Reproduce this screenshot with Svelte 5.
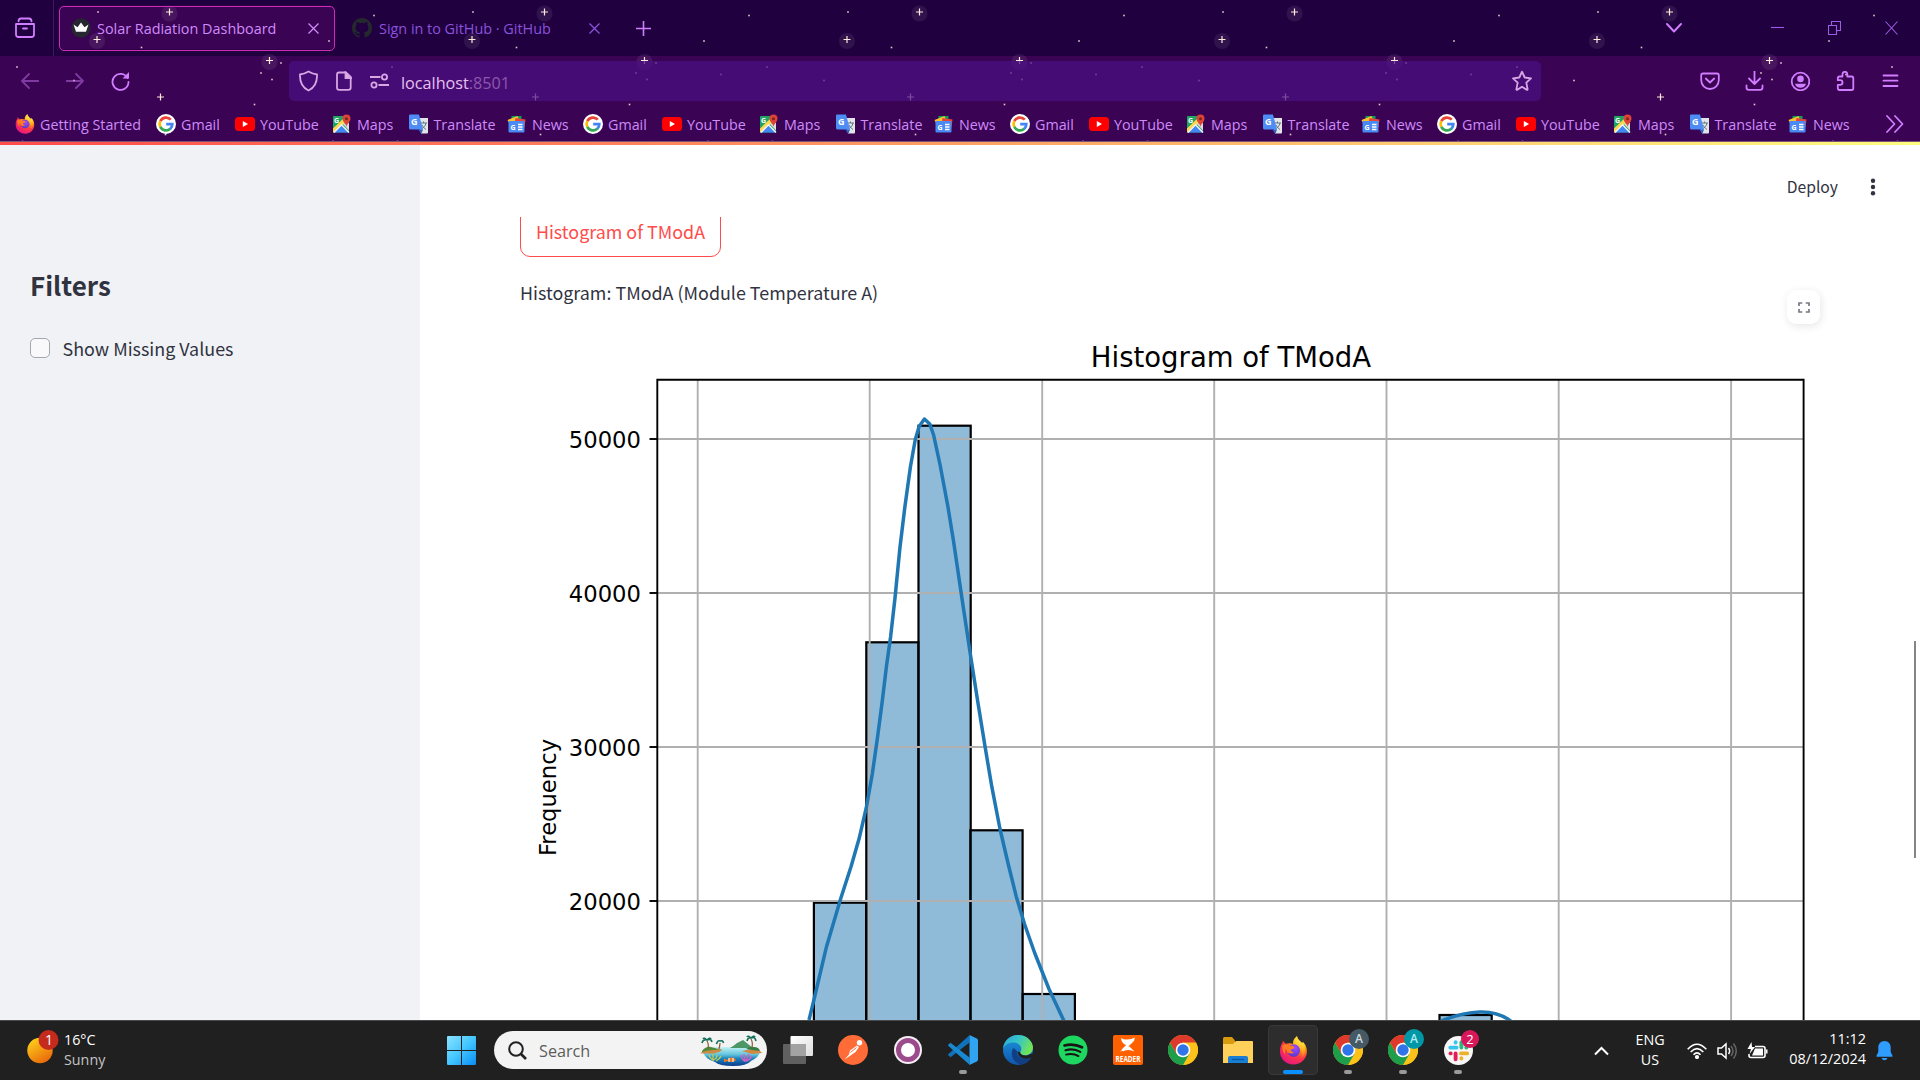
<script>
  const dots = [[98,12],[141.5,47.5],[329,41],[374,15.5],[281,63],[261,73],[272,79.5],[17,67],[254.5,104.5],[165.5,134.5],[22.5,141.5],[333,141.5],[346,74.5],[74,80.5]];
  const plain = [[160.5,97]];
  const glow = [[169.5,12],[97,39.5],[269.5,60.5]];
  const group = [
    { name: 'Gmail', w: 79 },
    { name: 'YouTube', w: 97 },
    { name: 'Maps', w: 76.5 },
    { name: 'Translate', w: 98.5 },
    { name: 'News', w: 76 }
  ];
  const bookmarks = [{ name: 'Getting Started', w: 141 }, ...group, ...group, ...group, ...group];

  const base = 1100;
  const bars = [[813.9,902.7],[866.3,642.3],[918.5,425.7],[970.4,830.3],[1022.7,994],[1439.5,1015]];
  const gx = [697.7,869.7,1042.2,1214.2,1386.5,1558.7,1731.1];
  const gy = [[439,'50000'],[593,'40000'],[747,'30000'],[901,'20000']];
  const curve = [[809,1020],[813.9,1000],[826.5,946.7],[840.8,898.3],[851,866.7],[859.2,838.3],[866.5,806.7],[872.4,773.3],[877.6,736.7],[882,703.3],[886.5,666],[890.6,636.7],[895,598],[899.9,548],[904.9,506.7],[910.4,467],[915.2,440],[919,426.7],[924.4,419],[929.8,424],[933.6,435],[940.1,465],[947.8,506],[953.5,541],[962.2,600],[970.2,653.3],[977.5,700],[984.5,743.3],[991.8,786.7],[1000,829],[1008.2,864],[1016.3,896.7],[1024.5,924],[1034.7,953],[1049,989],[1064,1021]];
  const line = 'M' + curve.map((p) => p.join(' ')).join('L');
</script>

{#snippet firefox(s)}
  <svg width={s} height={s} viewBox="0 0 30 30">
    <defs>
      <radialGradient id="ffb" cx=".78" cy=".12" r="1.05"><stop offset=".1" stop-color="#fff44f"/><stop offset=".36" stop-color="#ff980e"/><stop offset=".62" stop-color="#ff3647"/><stop offset=".95" stop-color="#e31587"/></radialGradient>
      <radialGradient id="ffp" cx=".6" cy=".3" r=".7"><stop offset="0" stop-color="#a04bff"/><stop offset="1" stop-color="#5b38c9"/></radialGradient>
      <linearGradient id="ffy" x1="1" y1="0" x2=".3" y2="1"><stop offset="0" stop-color="#fff23d"/><stop offset="1" stop-color="#ff9a1f" stop-opacity="0"/></linearGradient>
    </defs>
    <path d="M3.5 4.5 7 8C10 6.8 13 7.6 14.6 8.3 14 4.5 16.5 1.6 18.6 0c.3 3.2 2.8 4.8 5 7.1 1 .5.9-.6.8-1.5C28.500 9.500 29.500 14.500 28.600 19 27 25.800 21.300 29.500 15 29.500 7 29.500 1 23.500 1 15.800 1 12.300 1.800 9 4 6.300Z" fill="url(#ffb)"/>
    <circle cx="15.300" cy="15" r="6.500" fill="url(#ffp)"/>
    <path d="M3.300 9.500c3-2 7-.8 8.300.8 2.100-.4 3.700.3 4.300 1.500-.5 1.700-3.500 1.500-3.700 2.800-.1 1 1.100 2.200 3 2-1 1.800-3.500 2-5.700.8-1.700-.9-1.900-2.900-1.700-3.900-2 .6-1.400 5-1.200 6-2.800-3-3.600-6-3-10Z" fill="#ff7b22"/>
    <path d="M18.600 0c.3 3.200 2.800 4.800 5 7.100 5 5.200 3.600 12.400-.6 16.400 1.900-6-.2-10-2.600-12.400-2-2-5.300-5-1.800-11.100Z" fill="url(#ffy)"/>
  </svg>
{/snippet}

{#snippet chrome()}
  <svg width="30" height="30" viewBox="-15 -15 30 30">
    <circle r="14.900" fill="#fbbf12"/>
    <path d="M13-7.500A15 15 0 0 1 0 15L6.500 3.750 0-7.500Z" fill="#fcc21a"/>
    <path d="M0 15A15 15 0 0 1-13-7.500L-6.500 3.750 6.500 3.750Z" fill="#1e9e4b"/>
    <path d="M-13-7.500A15 15 0 0 1 13-7.500L0-7.500-6.500 3.750Z" fill="#dd3a2c"/>
    <circle r="7.300" fill="#fff"/><circle r="5.700" fill="#2f75e8"/>
  </svg>
{/snippet}

{#snippet mark(name)}
  {#if name === 'Gmail'}
    <svg width="20" height="20" viewBox="0 0 20 20"><circle cx="10" cy="10" r="10" fill="#fff"/>
      <g fill="none" stroke-width="2.700"><path d="M14.800 5.700A6.400 6.400 0 0 0 4.300 7.200" stroke="#ea4335"/><path d="M4.300 7.200a6.400 6.400 0 0 0 0 5.800" stroke="#fbbc05"/><path d="M4.300 12.900a6.400 6.400 0 0 0 10 1.900" stroke="#34a853"/><path d="M14.200 14.900A6.200 6.200 0 0 0 16.300 10.200H10.200" stroke="#4285f4"/></g></svg>
  {:else if name === 'YouTube'}
    <svg width="20" height="20" viewBox="0 0 20 20"><rect y="3" width="20" height="14" rx="3.500" fill="#f00"/><path d="M7.800 7v6l5.200-3Z" fill="#fff"/></svg>
  {:else if name === 'Maps'}
    <svg width="20" height="20" viewBox="0 0 20 20"><rect x="1" y="2" width="16" height="16.500" rx="1" fill="#1fa463"/><path d="M1 14.500 12 4l3 3L2.500 18.500H1Z" fill="#fdd84f"/><path d="m2 18.500 7.500-7.700 7.500 7.700" fill="#4286f5" stroke="#f1f1f1" stroke-width="1.600"/><path d="m10.500 9.500 6.500 7V9Z" fill="#ddd"/><path d="M14.500 13c0-3-4-5-4-8.500a4 4 0 0 1 8 0c0 3.500-4 5.500-4 8.500Z" fill="#dc4437"/><circle cx="14.500" cy="4.700" r="1.500" fill="#7c251d"/><text x="2" y="9" class="glyph">G</text></svg>
  {:else if name === 'Translate'}
    <svg width="20" height="20" viewBox="0 0 20 20"><path d="M8 4h11v14.500q0 1-1 1h-6Z" fill="#e2e5e8"/><path d="M11 9h7m-3.500-1.500V9m2.500 0c-.5 3-2.500 5-5 6m1-4c1 2 2 3 4 4.500" stroke="#5d7680" fill="none"/><path d="M1 .500h9L14 15.500H1.500q-1.500 0-1.500-1.500V1.500Q0 .500 1 .500Z" fill="#4e8df5"/><path d="m9 15.500 3.500 4 1.500-4Z" fill="#2e60c4"/><text x="2" y="11" class="glyph big">G</text></svg>
  {:else if name === 'News'}
    <svg width="20" height="20" viewBox=".5 0 20 20"><path d="M5 2h10v6H5Z" fill="#0f9d58"/><path d="m1 6 10-4 2 5L3 10Z" fill="#fbc02d"/><path d="m9 4 10 1.500-1 8L8 10Z" fill="#e5443b"/><rect x="2" y="7" width="16" height="11.500" rx="1" fill="#4a8af4"/><path d="M11.500 10.500H16m-4.500 2.500H16m-4.500 2.500H16" stroke="#fff" stroke-width="1.300"/><text x="4" y="15.700" class="glyph">G</text></svg>
  {:else}{@render firefox(20)}{/if}
{/snippet}

<div class="screen">
  <header>
    <svg class="sky" width="1920" height="142">
      <defs><pattern id="stars" width="375" height="142" patternUnits="userSpaceOnUse">
        {#each glow as [x, y]}<circle cx={x} cy={y + 1.500} r="8" fill="#fff" opacity=".07"/>{/each}
        {#each [...glow, ...plain] as [x, y]}<path d="M{x - 3.500} {y}h7M{x} {y - 3.500}v7" stroke="#ffe9dc" stroke-width="1.200"/>{/each}
        {#each dots as [x, y]}<rect x={x - .8} y={y - .8} width="1.600" height="1.600" fill="#e2c8cc"/>{/each}
      </pattern></defs>
      <rect width="1920" height="56" fill="#20003f"/><rect y="56" width="1920" height="86" fill="#3a0353"/>
      <rect x="59.500" y="5.500" width="275" height="44" rx="4" fill="#3a0353"/>
      <rect width="1920" height="142" fill="url(#stars)"/>
    </svg>

    <div class="tabs">
      <div class="view"><svg width="22" height="22" viewBox="0 0 22 22" class="ic"><path d="M4.500 4.300Q4.500 1.500 7 1.500h8q2.500 0 2.500 2.800M2 7h18v10.500q0 2.500-2.500 2.500h-13Q2 20 2 17.500ZM9 11.500h4"/></svg></div>
      <div class="tab active">
        <svg width="20" height="20" viewBox="0 0 20 20"><circle cx="10" cy="10" r="9.700" fill="#262730"/><path d="m2.500 6.500 4 2.700L10 4.500l3.500 4.700 4-2.700-2.500 7.300H5Z" fill="#fff"/></svg>
        <span>Solar Radiation Dashboard</span>
        <svg class="x" width="11" height="11" viewBox="0 0 11 11"><path d="m.500.500 10 10m0-10-10 10"/></svg>
      </div>
      <div class="tab">
        <svg width="20" height="20" viewBox="0 0 16 16"><path fill="#24292e" d="M8 0C3.580 0 0 3.580 0 8c0 3.540 2.290 6.530 5.470 7.590.4.070.55-.17.55-.38 0-.19-.01-.82-.01-1.490-2.010.37-2.530-.49-2.690-.94-.09-.23-.48-.94-.82-1.130-.28-.15-.68-.52-.01-.53.63-.01 1.080.58 1.230.82.72 1.210 1.870.87 2.330.66.07-.52.28-.87.51-1.070-1.780-.2-3.640-.89-3.640-3.950 0-.87.31-1.590.82-2.150-.08-.2-.36-1.020.08-2.120 0 0 .67-.21 2.200.82a7.600 7.600 0 0 1 4 0c1.530-1.040 2.200-.82 2.200-.82.44 1.100.16 1.920.08 2.120.51.56.82 1.270.82 2.150 0 3.070-1.870 3.750-3.650 3.950.29.25.54.73.54 1.480 0 1.070-.01 1.930-.01 2.200 0 .21.15.46.55.38A8 8 0 0 0 16 8c0-4.420-3.580-8-8-8Z"/></svg>
        <span class="title2">Sign in to GitHub · GitHub</span>
        <svg class="x dim" width="11" height="11" viewBox="0 0 11 11"><path d="m.500.500 10 10m0-10-10 10"/></svg>
      </div>
      <svg class="plus ic" width="15" height="15" viewBox="0 0 15 15"><path d="M7.500 0v15M0 7.500h15"/></svg>
      <div class="wins">
        <svg width="16" height="10" viewBox="0 0 16 10" class="ic"><path d="m1 1 7 7.500L15 1"/></svg>
        <svg width="13" height="14" viewBox="0 0 13 14" class="wi"><path d="M0 6.500h13"/></svg>
        <svg width="13" height="14" viewBox="0 0 13 14" class="wi"><path d="M.500 4.500h8v9h-8ZM3.500 4.500v-4h9v9h-4"/></svg>
        <svg width="13" height="14" viewBox="0 0 13 14" class="wi"><path d="m.500.500 12 13m0-13-12 13"/></svg>
      </div>
    </div>

    <div class="nav">
      <div class="arrows">
        <svg width="18" height="16" viewBox="0 0 18 16" class="ic off"><path d="M17.500 8H1.500M8 1 1 8l7 7"/></svg>
        <svg width="18" height="16" viewBox="0 0 18 16" class="ic off"><path d="M.500 8h16M10 1l7 7-7 7"/></svg>
        <svg width="19" height="20" viewBox="0 0 19 20" class="ic"><path d="M16.500 7A8 8 0 1 0 17.500 11"/><path d="M18 1v6.500h-6.500Z" fill="#d17dff" stroke="none"/></svg>
      </div>
      <div class="url">
        <svg width="19" height="22" viewBox="0 0 19 22"><path d="M9.500 1.500C12 3 14.500 4.200 18 4.500c.3 7-2 13-8.500 16C3 17.500.700 11.500 1 4.500c3.500-.3 6-1.500 8.500-3Z"/></svg>
        <svg width="16" height="20" viewBox="0 0 16 20"><path d="M3 1.500h7L14.700 6v10.500q0 2.300-2.300 2.300H3.300Q1 18.800 1 16.500v-13q0-2 2-2Z"/><path d="M9.500 1.500V7h5.500Z" fill="#e5b6e8"/></svg>
        <svg width="19" height="16" viewBox="0 0 19 16"><path d="M0 4h10.500M8.500 12H19"/><circle cx="14.500" cy="4" r="2.600"/><circle cx="4" cy="12" r="2.600"/></svg>
        <span>localhost<i>:8501</i></span>
        <svg class="star" width="22" height="22" viewBox="0 0 22 22"><path d="m11 1.700 2.700 5.800 6.300.8-4.700 4.300 1.300 6.500q.1 1-.9.700L11 16.800l-4.700 3q-1 .3-.9-.7l1.300-6.500L2 8.300l6.300-.8Z" stroke-linejoin="round"/></svg>
      </div>
      <div class="tools">
        <svg width="20" height="20" viewBox="0 0 20 20" class="ic"><path d="M3 2.500h14q1.800 0 1.800 1.800V9c0 5-3.800 9-8.800 9S1.200 14 1.200 9V4.300Q1.200 2.500 3 2.500ZM5.800 7.500 10 11.500l4.200-4"/></svg>
        <svg width="20" height="20" viewBox="0 0 20 20" class="ic"><path d="M9.500 0v13M4 7.500 9.500 13l5.500-5.500M1.500 14.500v2q0 2.300 2.300 2.300h11.400q2.300 0 2.300-2.300v-2"/></svg>
        <svg width="20" height="20" viewBox="0 0 20 20" class="ic"><circle cx="10.500" cy="10.500" r="8.800"/><g fill="#d17dff" stroke="none"><circle cx="10.500" cy="7.900" r="3.300"/><path d="M5 12.800h11c-1 3-3 4-5.500 4s-4.500-1-5.500-4Z"/></g></svg>
        <svg width="20" height="20" viewBox="0 0 20 20" class="ic"><path d="M6.500 5.500V3.200a2.400 2.400 0 0 1 4.800 0v2.300h4.300q1.700 0 1.700 1.700v10q0 1.800-1.700 1.800H3.500q-1.700 0-1.700-1.700v-3.500h2.400a2.300 2.300 0 0 0 0-4.600H1.800V7.200q0-1.700 1.700-1.700Z"/></svg>
        <svg width="20" height="20" viewBox="0 0 20 20" class="ic"><path d="M2.500 4.500h14M2.500 9.700h14M2.500 15h14"/></svg>
      </div>
    </div>

    <div class="marks">
      {#each bookmarks as b}
        <div class="mark" style:width="{b.w}px">{@render mark(b.name)}<span>{b.name}</span></div>
      {/each}
      <svg class="more ic" width="18" height="18" viewBox="0 0 18 18"><path d="m1 1 7.500 8L1 17M9 1l7.500 8L9 17"/></svg>
    </div>
  </header>

  <div class="page">
    <aside>
      <h2>Filters</h2>
      <label><span class="box"></span>Show Missing Values</label>
    </aside>
    <main>
      <div class="appbar"><span>Deploy</span><svg width="6" height="18" viewBox="0 0 6 18" fill="#31333f"><circle cx="3" cy="2.800" r="2.200"/><circle cx="3" cy="9" r="2.200"/><circle cx="3" cy="15.200" r="2.200"/></svg></div>
      <div class="scroll">
        <button>Histogram of TModA</button>
        <p>Histogram: TModA (Module Temperature A)</p>
        <svg class="chart" width="1300" height="690" viewBox="520 330 1300 690">
          <g fill="#1f77b4" fill-opacity=".5" stroke="#000" stroke-width="2.200">
            {#each bars as [x, y]}<rect {x} {y} width="52.200" height={base - y}/>{/each}
          </g>
          <g stroke="#b0b0b0" stroke-width="1.900">
            {#each gx as x}<path d="M{x} 380V1020"/>{/each}
            {#each gy as [y]}<path d="M657 {y}H1803.500"/>{/each}
          </g>
          <g fill="none" stroke="#1f77b4" stroke-width="3.500" stroke-linejoin="round"><path d={line}/><path d="M1437 1023Q1460 1012.500 1480 1012T1513 1023"/></g>
          <path d="M657.300 1030V379.700H1803.600V1030" fill="none" stroke="#000" stroke-width="1.900"/>
          {#each gy as [y, t]}<path d="M649.500 {y}h8" stroke="#000" stroke-width="1.900"/><text x="641" y={y + 9.300} text-anchor="end" font-size="22.700">{t}</text>{/each}
          <text x="1231" y="366.500" text-anchor="middle" font-size="27.500">Histogram of TModA</text>
          <text transform="translate(555.600 797.500) rotate(-90)" text-anchor="middle" font-size="22.700">Frequency</text>
        </svg>
      </div>
      <div class="full"><svg width="12" height="11" viewBox="0 0 12 11" fill="none" stroke="#777983" stroke-width="1.700"><path d="M1 4V1h3.300M7.700 1H11v3M11 7v3H7.700M4.300 10H1V7"/></svg></div>
      <div class="thumb"></div>
    </main>
  </div>

  <footer>
    <div class="weather">
      <svg width="40" height="40" viewBox="0 0 40 40"><defs><linearGradient id="sun" x1=".2" y1="0" x2=".8" y2="1"><stop offset="0" stop-color="#ffd21a"/><stop offset="1" stop-color="#e8620a"/></linearGradient></defs><circle cx="15" cy="20.500" r="12.700" fill="url(#sun)"/><circle cx="23.500" cy="10" r="10" fill="#c42b1c"/><text x="24" y="15" text-anchor="middle" class="badge">1</text></svg>
      <div><b>16°C</b><em>Sunny</em></div>
    </div>
    <svg class="win" width="29" height="29" viewBox="0 0 29 29"><defs><linearGradient id="wg" x1="0" y1="0" x2="1" y2="1"><stop offset="0" stop-color="#8be3ff"/><stop offset=".5" stop-color="#43c6ff"/><stop offset="1" stop-color="#0a8cf5"/></linearGradient></defs><path d="M1 0h13v14H0V1Q0 0 1 0ZM15 0h13q1 0 1 1v13H15ZM0 15h14v14H1q-1 0-1-1ZM15 15h14v13q0 1-1 1H15Z" fill="url(#wg)"/></svg>
    <div class="search">
      <svg width="19" height="19" viewBox="0 0 19 19" fill="none" stroke="#222" stroke-width="2"><circle cx="8" cy="8" r="6.800"/><path d="m13 13 5 5" stroke-width="2.600"/></svg>
      <span>Search</span>
      <svg width="62" height="31" viewBox="0 0 62 31">
        <defs><linearGradient id="sea" x1="0" y1="0" x2="0" y2="1"><stop offset="0" stop-color="#c4f2f4"/><stop offset=".4" stop-color="#62c3dc"/><stop offset=".6" stop-color="#1c86c0"/><stop offset="1" stop-color="#0b3c8c"/></linearGradient></defs>
        <path d="M3 17 14 12h34l12 5q-1 5-9 9-4 5-18 5t-18-4Q5 24 3 17Z" fill="url(#sea)"/>
        <path d="M30 13q5-3 7-5l6-3 5 4 5 4Z" fill="#4d9668"/><path d="M2 16q4-5 9-4l11 3-4 2H2Z" fill="#4c8d3c"/><path d="M0 18q6-3 15-3l5-1q3 1 0 2.500l-6 2H2ZM42 16l10-2q9 1 10 4l-10 1Z" fill="#d08a42"/><path d="M46 14q4-3 8-2 5 0 6 4l-8-1Z" fill="#367d45"/>
        <g fill="none" stroke="#8b5a2b" stroke-width="1.200"><path d="M8 14Q9 9 7 6M19 14q1-4 1-6M52 13q1-6-1-9"/></g>
        <g fill="none" stroke="#12705a" stroke-width="1.600"><path d="M2 8q1-4 5-3 4-2 5 2M7 5Q4 2 3 4M7 5q3-3 4-1M16.500 9q1-4 3.500-3 3-1 3.500 2M47 6q1-4 4-3 4-2 5 3M51 3q-3-3-4-1M51 3q3-3 4-1"/></g>
        <g fill="none" stroke="#b9cf55" stroke-width="1.300"><path d="M9 20q1 4 5 5m-1-6v7m4-6q0 4-4 5m8-4q-1 3-5 5"/></g>
        <g fill="none" stroke="#d65fc0" stroke-width="1.500"><path d="M41 20q1 5 4 6m-1-7 1 8m4-8-3 7m6-5q-2 4-6 5"/></g>
        <path d="m24 23.500 3 1.500q3-3.500 7-2l2 2q-3 3.500-8 1l-4 1Z" fill="#f47a20"/><path d="M29 23v4m4-4v4" stroke="#fff"/>
      </svg>
    </div>
    <div class="apps">
      <div class="app"><svg width="30" height="28" viewBox="0 0 30 28"><defs><linearGradient id="tv" x1="0" y1="0" x2="1" y2="1"><stop offset="0" stop-color="#fff"/><stop offset="1" stop-color="#dedede"/></linearGradient></defs><rect x="7.500" width="22.500" height="20" rx="1" fill="url(#tv)"/><rect y="8" width="23" height="20" rx="1" fill="#666" opacity=".92"/><rect x="7.500" y="8" width="15.500" height="12" fill="#a3a3a3"/></svg></div>
      <div class="app"><svg width="30" height="30" viewBox="0 0 30 30"><circle cx="15" cy="15" r="15" fill="#ff6c37"/><circle cx="21.500" cy="7.800" r="2.700" fill="#fff"/><path d="m19 10.500-7 5-1 4-4.500 5 6-4 5-3.500 3.500-5Z" fill="#fff"/><path d="m12.500 17.500 6-5" stroke="#ff6c37"/></svg></div>
      <div class="app"><svg width="28" height="28" viewBox="0 0 28 28"><circle cx="14" cy="14" r="14" fill="#f5eef4"/><circle cx="14" cy="14" r="9.500" fill="#fff" stroke="#9b4a8c" stroke-width="5"/></svg></div>
      <div class="app run"><svg width="30" height="30" viewBox="0 0 30 30"><path d="m21.500 7.500-19 14.800-2.300-2q-.4-.8.300-1.300L21.500.200Z" fill="#0f72bb"/><path d="m21.500 22.500-19-14.800-2.300 2q-.4.800.3 1.300l21 18.800Z" fill="#1988d1"/><path d="M21.500 0 28.800 3.500q1.200.5 1.200 2v19q0 1.500-1.200 2L21.500 30Z" fill="#30a4f1"/></svg></div>
      <div class="app"><svg width="30" height="30" viewBox="0 0 30 30"><defs><linearGradient id="e1" x1="0" y1="0" x2="1" y2=".4"><stop offset="0" stop-color="#2aa5df"/><stop offset=".55" stop-color="#38c7c5"/><stop offset="1" stop-color="#70e25b"/></linearGradient><linearGradient id="e2" x1="0" y1="0" x2="0" y2="1"><stop offset="0" stop-color="#1c98df"/><stop offset="1" stop-color="#1055ac"/></linearGradient></defs><circle cx="15" cy="15" r="15" fill="url(#e2)"/><path d="M0 14C.500 5.500 7.500 0 15 0c9 0 15 6.500 15 12.500 0 5-4 7.800-8 7.800-3 0-5-1.300-5-2.600 0-1 1.300-1.500 1.300-4.200 0-3-3.500-6-8-6C5 7.500 1 10.500 0 14Z" fill="url(#e1)"/><path d="M10.500 13c-4.500 6 0 15.500 8.500 16.500 4-1 7.500-3.500 9.300-7-7 3.500-15 .5-14.300-6.500Z" fill="#123f83"/><path d="M17.200 17.300c0 2 3.500 4.200 8 2.700L30 18v4l-1.800.5c-1 .6-3 1.300-5.700 1.300-5 0-8-4-8-7.300Z" fill="#202020"/></svg></div>
      <div class="app"><svg width="30" height="30" viewBox="0 0 30 30"><circle cx="15" cy="15" r="14.500" fill="#1ed760"/><g fill="none" stroke="#191414" stroke-linecap="round"><path d="M6.500 10.500q9-2.500 17.500 1.800" stroke-width="2.700"/><path d="M7.500 15.300q8-2.300 14.800 1.600" stroke-width="2.200"/><path d="M8 19.600q7-1.700 12.500 1.500" stroke-width="1.900"/></g></svg></div>
      <div class="app"><svg width="30" height="30" viewBox="0 0 30 30"><rect width="30" height="30" rx="2" fill="#ff6000"/><path d="M8 3q3 2 6 1.500Q19 4.500 22 2.500q-1 5-7.500 8Q8.500 9 8 3ZM7 16.500l6.500-5h3l5 5q-3-1.500-6-1.500-4 0-8.500 1.500Z" fill="#fff"/><path d="m20.500 4.500-11 11" stroke="#fff" stroke-width="2.500"/><text transform="translate(15 26.500) scale(.68 1)" text-anchor="middle" class="reader">READER</text></svg></div>
      <div class="app">{@render chrome()}</div>
      <div class="app"><svg width="30" height="26" viewBox="0 0 30 26"><path d="M0 1.500Q0 0 1.500 0H9l3 3.500V8H0Z" fill="#d99a0b"/><path d="M0 7h10l3-3h16q1 0 1 1v21H0Z" fill="#ffd05a"/><path d="M5 26v-5q0-2 2-2h16q2 0 2 2v5Z" fill="#1a7ed2"/><path d="M9 22.500h12" stroke="#0a5ba5" stroke-width="1.300"/></svg></div>
      <div class="app current">{@render firefox(29)}</div>
      <div class="app run">{@render chrome()}<i class="pill slate">A</i></div>
      <div class="app run">{@render chrome()}<i class="pill teal">A</i></div>
      <div class="app run"><svg width="29" height="29" viewBox="0 0 30 30"><circle cx="15" cy="15" r="15" fill="#f7f7f7"/><g fill="none" stroke-width="4" stroke-linecap="round"><path d="M6.500 12H13M12 6.500v.3" stroke="#36c5f0"/><path d="M18 6.500V12M23 12h.2" stroke="#2eb67d"/><path d="M17.500 18H24M18 23v.3" stroke="#ecb22e"/><path d="M12 18v6M6.700 18H7" stroke="#e01e5a"/></g></svg><i class="pill slack">2</i></div>
    </div>
    <div class="tray">
      <svg width="15" height="10" viewBox="0 0 15 10" fill="none" stroke="#fff" stroke-width="2"><path d="m1 8.500 6.500-6.500L14 8.500"/></svg>
      <div class="lang">ENG<br>US</div>
      <svg class="wifi" width="20" height="16" viewBox="0 0 20 16" fill="none" stroke="#fff" stroke-width="1.600"><path d="M.7 6.200Q10-3.700 19.300 6.200M3.700 9Q10 2.300 16.300 9M6.500 11.700q3.500-3.700 7 0"/><circle cx="10" cy="14" r="1.300" fill="#fff"/></svg>
      <svg class="vol" width="21" height="18" viewBox="0 0 21 18" fill="none" stroke="#fff" stroke-width="1.500"><path d="M1 6h3.500L9 2v14l-4.500-4H1Z"/><path d="M11.500 6q2.300 3 0 6"/><path d="M14 4q4 5 0 10M16.500 1.500q5.500 7.500 0 15" stroke="#666"/></svg>
      <svg class="bat" width="21" height="18" viewBox="0 0 21 18"><path d="M8 4.500h8q2 0 2 2v7q0 2-2 2H4q-2 0-2-2v-1.500" fill="none" stroke="#fff" stroke-width="1.600"/><path d="M8 6.500h8v7H5ZM19 7.500h1.500v4H19ZM4.500 0 .500 7H4l-1.500 5L8 5H5Z" fill="#fff"/></svg>
      <div class="clock">11:12<br>08/12/2024</div>
      <svg class="bell" width="17" height="20" viewBox="0 0 17 20" fill="#2e9dff"><path d="M8.500 0C4.500 0 2.300 3 2.300 6.500V11L.500 14.800q-.4 1 .6 1h14.800q1 0 .6-1L14.700 11V6.500C14.700 3 12.500 0 8.500 0ZM5.500 17h6q-.8 2.300-3 2.300t-3-2.300Z"/></svg>
    </div>
  </footer>
</div>

<style>
  :global(body) { margin: 0; }
  .screen { width: 1920px; height: 1080px; overflow: hidden; display: flex; flex-direction: column; font-family: "Open Sans", "Noto Sans", sans-serif; }
  svg { display: block; flex: none; }
  header { position: relative; height: 145px; box-sizing: border-box; display: flex; flex-direction: column; flex: none; }
  header::after { content: ''; height: 4px; background: linear-gradient(90deg, #ff4b4b, #ffa062 50%, #fffd80); z-index: 1; flex: none; border-top: 1px solid #7b5277; box-sizing: border-box; }
  .sky { position: absolute; inset: 0; }
  .ic { fill: none; stroke: #d17dff; stroke-width: 1.800; stroke-linecap: round; stroke-linejoin: round; }
  .off { opacity: .45; }
  .tabs, .nav, .marks { position: relative; display: flex; align-items: center; }
  .tabs { height: 56px; flex: none; }
  .view { width: 54px; height: 56px; box-sizing: border-box; border-right: 1px solid #3c1867; padding: 17px 0 0 14px; }
  .tab { height: 45px; width: 276px; box-sizing: border-box; margin-left: 5px; border: 1px solid transparent; border-radius: 5px; display: flex; align-items: center; padding-left: 11px; color: #8b52dd; font-size: 14.400px; white-space: nowrap; }
  .active { border-color: #cf2cb5; color: #cf8bfb; }
  .tab span { margin-left: 6px; width: 211px; }
  .tab .title2 { margin-left: 7px; width: 210px; }
  .tab + .tab { width: 289px; }
  .x { stroke: #cf8bfb; stroke-width: 1.300; }
  .x.dim { stroke: #8b52dd; }
  .plus { margin-left: 7px; stroke-width: 1.600; }
  .wins { margin-left: auto; display: flex; align-items: center; padding-right: 22px; gap: 44px; }
  .wins svg:first-child { margin-right: 45px; stroke-width: 1.900; }
  .wi { fill: none; stroke: #9b5ce8; stroke-width: 1.100; }
  .nav { height: 50px; flex: none; }
  .arrows { width: 268px; padding-left: 21px; display: flex; gap: 27px; align-items: center; }
  .url { width: 1252px; height: 40px; border-radius: 5px; background: rgba(74, 17, 131, .72); display: flex; align-items: center; }
  .url svg { fill: none; stroke: #d9a6e4; stroke-width: 1.800; }
  .url svg:nth-child(1) { margin-left: 10px; }
  .url svg:nth-child(2) { margin-left: 18px; }
  .url svg:nth-child(3) { margin-left: 18px; }
  .url span { margin-left: 12px; font-size: 16.200px; color: #e8c0ee; padding-top: 4px; }
  .url i { font-style: normal; color: #8d58a8; }
  .url .star { margin-left: auto; margin-right: 8px; }
  .tools { display: flex; gap: 25.200px; margin-left: 159px; }
  .marks { height: 35px; padding-left: 15px; flex: none; }
  .mark { display: flex; align-items: center; gap: 5px; flex: none; white-space: nowrap; font-size: 14.300px; color: #cf8bfb; }
  .mark span { padding-top: 2px; }
  .more { margin-left: 22px; }
  .glyph { fill: #fff; font: 700 7px "Open Sans", sans-serif; }
  .glyph.big { font-size: 9px; }
  .page { flex: 1; min-height: 0; display: flex; font-family: "Noto Sans CJK SC", "Noto Sans CJK JP", sans-serif; color: #31333f; }
  aside { width: 420px; box-sizing: border-box; padding: 117px 30px 0; background: #f0f2f6; }
  h2 { margin: 0; font-size: 26px; line-height: 46px; font-weight: 600; }
  label { display: flex; align-items: center; gap: 12.500px; font-size: 17.900px; line-height: 26px; margin-top: 27px; }
  .box { width: 20px; height: 20px; box-sizing: border-box; border: 1px solid #a5a7ae; border-radius: 5px; background: #f9f9fb; }
  main { position: relative; flex: 1; background: #fff; display: flex; flex-direction: column; }
  .appbar { height: 72px; flex: none; padding: 12px 44px 0 0; box-sizing: border-box; display: flex; align-items: center; justify-content: flex-end; gap: 32px; font-size: 15.700px; }
  .appbar span { margin-top: -2px; }
  .scroll { flex: 1; min-height: 0; overflow: hidden; padding-left: 100px; display: flex; flex-direction: column; align-items: flex-start; }
  button { margin: -10px 0 0; height: 50px; width: 201px; flex: none; box-sizing: border-box; border: 1px solid #ff4b4b; border-radius: 10px; background: #fff; color: #ff4b4b; font: 17.900px "Noto Sans CJK SC", sans-serif; padding: 0 0 2px 0; white-space: nowrap; }
  p { margin: 19px 0 0; font-size: 17.900px; line-height: 32px; height: 32px; }
  .chart { margin-top: 22px; font-family: "DejaVu Sans", sans-serif; }
  .full { position: absolute; right: 100px; top: 145px; width: 33px; height: 34px; border-radius: 9px; background: #fff; box-shadow: 1px 2px 9px rgba(0, 0, 0, .1); display: grid; place-items: center; }
  .thumb { position: absolute; right: 4px; top: 496px; width: 2px; height: 217px; background: #858585; }
  footer { height: 60px; flex: none; box-sizing: border-box; border-top: 1px solid #484a4b; background: #202020; color: #fff; display: flex; align-items: center; font-size: 14.300px; }
  .weather { width: 447px; box-sizing: border-box; padding-left: 25px; display: flex; align-items: center; margin-top: -2px; }
  .weather div { margin-left: -1px; }
  .weather b, .weather em { display: block; font-weight: 400; font-style: normal; line-height: 20px; }
  .weather em { color: #c4c4c4; }
  .badge { fill: #fff; font: 14px "Open Sans", sans-serif; }
  .win { margin-right: 18px; }
  .search { width: 273px; height: 38px; border-radius: 19px; background: #f3f3f3; box-sizing: border-box; padding: 0 5px 0 14px; display: flex; align-items: center; margin-top: -1px; }
  .search span { color: #5c5c5c; font-size: 16.200px; margin: 0 auto 0 12px; padding-top: 2px; }
  .apps { display: flex; gap: 5px; margin-left: 6px; }
  .app { width: 50px; height: 50px; display: grid; place-items: center; position: relative; border-radius: 5px; box-sizing: border-box; margin-top: -1px; }
  .run::after, .current::after { content: ''; position: absolute; left: 21px; bottom: 1px; width: 8px; height: 4px; border-radius: 2px; background: #9a9a9a; }
  .current { background: #2d2d2d; box-shadow: inset 0 0 0 1px #393939; }
  .current::after { left: 15px; width: 20px; background: #0a91ff; }
  .pill { position: absolute; left: 26px; top: 4px; width: 20px; height: 20px; border-radius: 50%; display: grid; place-items: center; font: 600 12px/1 "Open Sans", sans-serif; box-sizing: border-box; }
  .slate { background: #455a64; color: #cfd8dc; }
  .teal { background: #0097a7; color: #b2ebf2; }
  .slack { left: 28px; top: 5px; width: 18px; height: 18px; background: #d8175a; font-size: 13px; font-weight: 400; }
  .reader { font: 700 9.500px "Open Sans", sans-serif; fill: #fff; }
  .tray { margin-left: auto; display: flex; align-items: center; padding-right: 27px; line-height: 20px; }
  .lang { text-align: center; margin-left: 26px; margin-top: -1px; width: 30px; display: flex; flex-direction: column; align-items: center; }
  .wifi { margin-left: 22px; }
  .vol { margin-left: 10px; }
  .bat { margin-left: 9px; }
  .clock { width: 86px; text-align: right; margin-left: 12px; margin-top: -3px; white-space: nowrap; display: flex; flex-direction: column; align-items: flex-end; font-size: 14.450px; }
  .bell { margin-left: 10px; }
</style>
